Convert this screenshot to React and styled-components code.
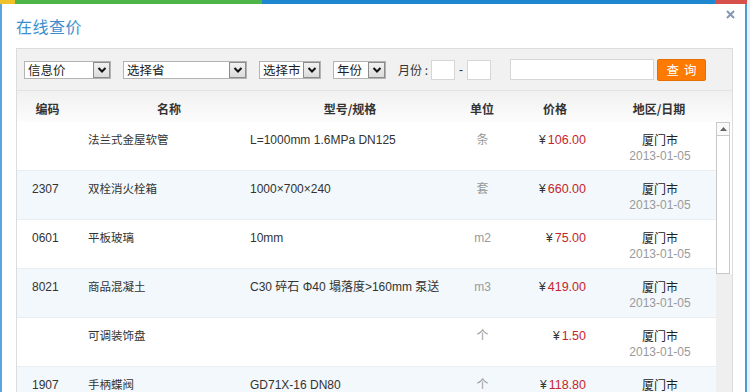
import React from "react";
import styled, { createGlobalStyle } from "styled-components";

const Global = createGlobalStyle`
  html, body { margin: 0; padding: 0; }
  body {
    background: #e9f1f8;
    overflow: hidden;
    font-family: "Liberation Sans", "Noto Sans CJK SC", sans-serif;
    color: #333;
  }
`;

const Window = styled.div`
  width: 747px;
  height: 392px;
  display: flex;
  flex-direction: column;
  background: #fff;
  overflow: hidden;
`;

const Stripe = styled.div`
  height: 4px;
  display: flex;
  flex-shrink: 0;
`;

const StripeSeg = styled.div`
  width: ${(p) => p.$w}px;
  flex: ${(p) => (p.$grow ? 1 : "none")};
  background: ${(p) => p.$c};
`;

const DialogBody = styled.div`
  position: relative;
  flex: 1;
  display: flex;
  flex-direction: column;
  border-left: 2px solid #5aa6dc;
  border-right: 2px solid #4b9bd7;
  padding: 0 12px 0 14px;
  min-height: 0;
`;

const TitleBar = styled.div`
  height: 44px;
  display: flex;
  align-items: center;
  flex-shrink: 0;
`;

const Title = styled.h1`
  margin: 0;
  font-family: "Noto Sans CJK SC", sans-serif;
  font-weight: 400;
  font-size: 16px;
  color: #3b8fd1;
  letter-spacing: 0.5px;
`;

const Close = styled.button`
  position: absolute;
  top: 4px;
  right: 9px;
  width: 12px;
  height: 12px;
  padding: 0;
  border: 0;
  background: transparent;
  display: flex;
  align-items: center;
  justify-content: center;
`;

const Panel = styled.div`
  flex: 1;
  display: flex;
  flex-direction: column;
  border: 1px solid #dcdcdc;
  border-bottom: 0;
  min-height: 0;
`;

const Toolbar = styled.div`
  height: 41px;
  flex-shrink: 0;
  display: flex;
  align-items: center;
  gap: 12px;
  padding-left: 7px;
  background: #f1f1f1;
  border-bottom: 1px solid #e3e3e3;
`;

const SelectBox = styled.div`
  width: ${(p) => p.$w}px;
  height: 18px;
  box-sizing: border-box;
  border: 1px solid #b3b3b3;
  background: #fff;
  display: flex;
  align-items: center;
  justify-content: space-between;
  font-family: "Noto Sans CJK SC", sans-serif;
  font-size: 12.5px;
  color: #222;
  padding-left: 3px;
`;

const SelectBtn = styled.span`
  width: 17px;
  height: 16px;
  box-sizing: border-box;
  border: 1px solid #8c8c8c;
  background: linear-gradient(#f2f2f2, #dcdcdc);
  display: flex;
  align-items: center;
  justify-content: center;
`;

const MonthGroup = styled.div`
  display: flex;
  align-items: center;
  gap: 3px;
`;

const Label = styled.span`
  font-family: "Noto Sans CJK SC", sans-serif;
  font-size: 12px;
  color: #333;
  white-space: pre;
`;

const SmallInput = styled.div`
  width: ${(p) => p.$w}px;
  height: ${(p) => p.$h || 20}px;
  box-sizing: border-box;
  border: 1px solid #d6d6d6;
  background: #fff;
`;

const Dash = styled.span`
  font-size: 12px;
  color: #333;
  padding: 0 1px;
`;

const SearchGroup = styled.div`
  display: flex;
  align-items: center;
  gap: 3px;
  margin-left: 7px;
`;

const QueryBtn = styled.button`
  width: 49px;
  height: 22px;
  border: 1px solid #e56f00;
  border-radius: 2px;
  background: #ff7a00;
  color: #fff;
  font-family: "Noto Sans CJK SC", sans-serif;
  font-size: 12.5px;
  letter-spacing: 5px;
  padding: 0 0 0 5px;
  line-height: 20px;
`;

const HeadRow = styled.div`
  height: 31px;
  flex-shrink: 0;
  display: grid;
  grid-template-columns: 61px 182px 180px 84px 62px 146px;
  align-items: center;
  padding-top: 4px;
  box-sizing: border-box;
  background: linear-gradient(#f1f1f1, #fcfcfc);
`;

const HeadCell = styled.div`
  text-align: center;
  font-family: "Noto Sans CJK SC", sans-serif;
  font-weight: 700;
  font-size: 12px;
  color: #333;
`;

const BodyWrap = styled.div`
  flex: 1;
  display: flex;
  min-height: 0;
  overflow: hidden;
`;

const Rows = styled.div`
  width: 699px;
  flex-shrink: 0;
`;

const Row = styled.div`
  height: 49px;
  box-sizing: border-box;
  display: grid;
  grid-template-columns: 63px 160px 215px 55px 90px 116px;
  align-items: start;
  padding-top: 10px;
  border-bottom: 1px solid #e8eef2;
  background: ${(p) => (p.$alt ? "#f2f8fb" : "#fff")};
  font-size: 12px;
  line-height: 16px;
`;

const Cell = styled.div`
  text-align: ${(p) => p.$align || "left"};
  padding-left: ${(p) => p.$pl || 0}px;
  padding-right: ${(p) => p.$pr || 0}px;
  color: ${(p) => p.$color || "#333"};
  font-size: ${(p) => p.$fs || 12}px;
  white-space: nowrap;
`;

const Yen = styled.span`
  color: #333;
  margin-right: 2px;
`;

const Price = styled.span`
  color: #c4262c;
  font-size: 12.5px;
`;

const City = styled.div`
  font-family: "Noto Sans CJK SC", sans-serif;
  color: #222;
  font-size: 12px;
`;

const DateText = styled.div`
  color: #9a9a9a;
  font-size: 12px;
`;

const ScrollCol = styled.div`
  width: 16px;
  display: flex;
  flex-direction: column;
`;

const ScrollTop = styled.div`
  background: #fff;
  padding-right: 2px;
  display: flex;
  flex-direction: column;
`;

const UpBtn = styled.div`
  height: 14px;
  box-sizing: border-box;
  border: 1px solid #c9c9c9;
  background: #fafafa;
  display: flex;
  align-items: center;
  justify-content: center;
`;

const Thumb = styled.div`
  height: 138px;
  box-sizing: border-box;
  border: 1px solid #c9c9c9;
  border-top: 0;
  background: #fff;
`;

const Track = styled.div`
  flex: 1;
  background: #efefef;
`;

const Chevron = () => (
  <svg width="10" height="8" viewBox="0 0 10 8">
    <path d="M1.5 2 L5 5.5 L8.5 2" fill="none" stroke="#111" strokeWidth="2" />
  </svg>
);

const Select = ({ w, children }) => (
  <SelectBox $w={w}>
    <span>{children}</span>
    <SelectBtn>
      <Chevron />
    </SelectBtn>
  </SelectBox>
);

const rows = [
  { code: "", name: "法兰式金屋软管", spec: "L=1000mm 1.6MPa DN125", unit: "条", price: "106.00" },
  { code: "2307", name: "双栓消火栓箱", spec: "1000×700×240", unit: "套", price: "660.00" },
  { code: "0601", name: "平板玻璃", spec: "10mm", unit: "m2", price: "75.00" },
  { code: "8021", name: "商品混凝土", spec: "C30 碎石 Φ40 塌落度>160mm 泵送", unit: "m3", price: "419.00" },
  { code: "", name: "可调装饰盘", spec: "", unit: "个", price: "1.50" },
  { code: "1907", name: "手柄蝶阀", spec: "GD71X-16 DN80", unit: "个", price: "118.80" },
];

export default function App() {
  return (
    <>
      <Global />
      <Window>
        <Stripe>
          <StripeSeg $w={15} $c="#efc12a" />
          <StripeSeg $w={247} $c="#4db549" />
          <StripeSeg $w={453} $c="#1e87d0" />
          <StripeSeg $grow $c="#d8504c" />
        </Stripe>
        <DialogBody>
          <TitleBar>
            <Title>在线查价</Title>
          </TitleBar>
          <Close aria-label="关闭">
            <svg width="9" height="9" viewBox="0 0 9 9">
              <path d="M1 1 L8 8 M8 1 L1 8" stroke="#8797b1" strokeWidth="2" />
            </svg>
          </Close>
          <Panel>
            <Toolbar>
              <Select w={87}>信息价</Select>
              <Select w={124}>选择省</Select>
              <Select w={62}>选择市</Select>
              <Select w={53}>年份</Select>
              <MonthGroup>
                <Label>月份 :</Label>
                <SmallInput $w={24} />
                <Dash>-</Dash>
                <SmallInput $w={24} />
              </MonthGroup>
              <SearchGroup>
                <SmallInput $w={144} $h={21} />
                <QueryBtn>查询</QueryBtn>
              </SearchGroup>
            </Toolbar>
            <HeadRow>
              <HeadCell>编码</HeadCell>
              <HeadCell>名称</HeadCell>
              <HeadCell>型号/规格</HeadCell>
              <HeadCell>单位</HeadCell>
              <HeadCell>价格</HeadCell>
              <HeadCell>地区/日期</HeadCell>
            </HeadRow>
            <BodyWrap>
              <Rows>
                {rows.map((r, i) => (
                  <Row key={i} $alt={i % 2 === 1}>
                    <Cell $pl={15}>{r.code}</Cell>
                    <Cell $pl={8} $fs={11.5}>{r.name}</Cell>
                    <Cell $pl={10}>{r.spec}</Cell>
                    <Cell $align="center" $color="#9a9a9a">{r.unit}</Cell>
                    <Cell $align="right" $pr={14}>
                      <Yen>¥</Yen>
                      <Price>{r.price}</Price>
                    </Cell>
                    <Cell $align="center" $pl={4}>
                      <City>厦门市</City>
                      <DateText>2013-01-05</DateText>
                    </Cell>
                  </Row>
                ))}
              </Rows>
              <ScrollCol>
                <ScrollTop>
                  <UpBtn>
                    <svg width="7" height="4" viewBox="0 0 7 4">
                      <path d="M0 4 L3.5 0 L7 4 Z" fill="#666" />
                    </svg>
                  </UpBtn>
                  <Thumb />
                </ScrollTop>
                <Track />
              </ScrollCol>
            </BodyWrap>
          </Panel>
        </DialogBody>
      </Window>
    </>
  );
}
